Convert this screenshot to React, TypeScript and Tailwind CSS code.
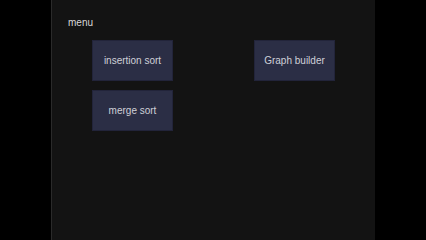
export default function App() {
  const btn =
    "h-[41px] w-[81px] flex items-center justify-center bg-[#2b2e45] border border-[#22243a] text-[10px] text-[#cfd0d8]";

  return (
    <div className="w-[426px] h-[240px] bg-black flex justify-center font-['Liberation_Sans',Arial,sans-serif]">
      <div className="w-[324px] h-full bg-[#131313] border-l border-[#2a2a2a] pl-[16px] pt-[17px]">
        <div className="text-[10px] leading-[12px] text-[#d8d8d8]">menu</div>
        <div className="grid grid-cols-[81px_81px_81px] gap-y-[9px] mt-[11px] ml-[24px]">
          <button className={btn}>insertion sort</button>
          <div />
          <button className={btn}>Graph builder</button>
          <button className={btn}>merge sort</button>
        </div>
      </div>
    </div>
  );
}
